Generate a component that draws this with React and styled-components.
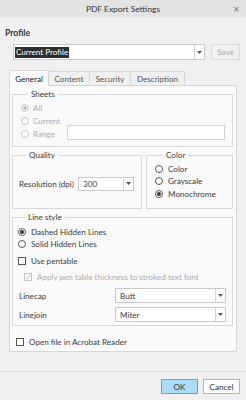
import React from 'react';
import styled, { createGlobalStyle } from 'styled-components';

const Global = createGlobalStyle`
  html, body { margin: 0; padding: 0; background: #f0f0f0; }
  body { font-family: Lato, "Noto Sans", sans-serif; font-size: 8.1px; color: #3a3a3a; }
  * { box-sizing: border-box; }
`;

const Window = styled.div`
  width: 246px;
  height: 400px;
  display: flex;
  flex-direction: column;
  background: #f0f0f0;
  overflow: hidden;
`;

const TitleBar = styled.div`
  height: 17px;
  flex: none;
  background: #e3e3e3;
  display: grid;
  grid-template-columns: 1fr auto 1fr;
  align-items: center;
  font-size: 8.4px;
  color: #333;
`;

const Title = styled.span`
  grid-column: 2;
`;

const Close = styled.span`
  grid-column: 3;
  justify-self: end;
  margin-right: 6px;
  font-size: 8px;
  color: #777;
  line-height: 1;
`;

const Body = styled.div`
  flex: 1;
  display: flex;
  flex-direction: column;
  padding: 10px 6px 0 5px;
`;

const SectionLabel = styled.div`
  font-weight: 700;
  font-size: 8.6px;
  line-height: 12px;
  color: #333;
`;

const ProfileRow = styled.div`
  display: flex;
  gap: 6px;
  margin-top: 5px;
  padding-left: 8px;
  height: 16px;
`;

const Combo = styled.div`
  display: flex;
  align-items: stretch;
  background: #fff;
  border: 1px solid #c9c9c9;
  width: ${p => p.$w}px;
  height: ${p => p.$h || 15}px;
  flex: none;
`;

const ComboValue = styled.div`
  flex: 1;
  display: flex;
  align-items: center;
  padding-left: ${p => p.$pad ?? 4}px;
  white-space: nowrap;
  overflow: hidden;
  color: #3a3a3a;
`;

const Selected = styled.span`
  background: #2f2f2f;
  color: #fff;
  line-height: 11px;
  padding: 0 1px;
`;

const ArrowBox = styled.div`
  width: 10px;
  flex: none;
  border-left: 1px solid #d4d4d4;
  display: flex;
  align-items: center;
  justify-content: center;
`;

const Button = styled.button`
  font: inherit;
  width: ${p => p.$w}px;
  height: ${p => p.$h}px;
  padding: 0;
  border: 1px solid ${p => (p.$primary ? '#52ade4' : p.disabled ? '#dadada' : '#b3b3b3')};
  background: ${p => (p.$primary ? '#a9ddf7' : p.disabled ? '#f0f0f0' : '#fdfdfd')};
  color: ${p => (p.disabled ? '#a9a9a9' : '#333')};
  flex: none;
`;

const Tabs = styled.div`
  display: flex;
  margin-top: 10px;
  margin-left: 4px;
  height: 15px;
  position: relative;
  z-index: 1;
`;

const Tab = styled.div`
  width: ${p => p.$w}px;
  height: ${p => (p.$active ? 16 : 15)}px;
  margin-top: ${p => (p.$active ? 0 : 1)}px;
  border: 1px solid #d6d6d6;
  border-bottom: ${p => (p.$active ? 'none' : '1px solid #d6d6d6')};
  margin-left: -1px;
  background: ${p => (p.$active ? '#fafafa' : '#f0f0f0')};
  display: flex;
  align-items: center;
  justify-content: center;
  color: ${p => (p.$active ? '#222' : '#555')};
  &:first-child { margin-left: 0; }
`;

const Panel = styled.div`
  margin-left: 4px;
  margin-right: 3px;
  height: 267px;
  border: 1px solid #d6d6d6;
  background: #fafafa;
  padding: 2px 3px 3px 2px;
  display: flex;
  flex-direction: column;
`;

const Group = styled.fieldset`
  margin: 0;
  min-width: 0;
  border: 1px solid #d8d8d8;
  padding: ${p => p.$pad};
  display: flex;
  flex-direction: column;
  width: ${p => (p.$w ? `${p.$w}px` : 'auto')};
  flex: ${p => (p.$grow ? 1 : 'none')};
  justify-content: ${p => (p.$center ? 'center' : 'flex-start')};
`;

const Legend = styled.legend`
  padding: 0 3px;
  margin-left: ${p => p.$ml || 7}px;
  line-height: 12px;
  color: #3a3a3a;
`;

const GroupRow = styled.div`
  display: flex;
  gap: 4px;
  margin-top: 2px;
`;

const OptionRow = styled.div`
  display: flex;
  align-items: center;
  height: ${p => p.$h || 13}px;
  padding-left: ${p => p.$indent || 0}px;
  margin-top: ${p => p.$mt || 0}px;
  color: ${p => (p.$disabled ? '#ababab' : '#3a3a3a')};
  white-space: nowrap;
`;

const RadioCircle = styled.span`
  width: 8px;
  height: 8px;
  border-radius: 50%;
  border: 1px solid ${p => (p.$disabled ? '#c6c6c6' : '#555')};
  background: #fff;
  display: inline-flex;
  align-items: center;
  justify-content: center;
  flex: none;
  margin-right: ${p => p.$gap || 4}px;
  &::after {
    content: '';
    width: 4px;
    height: 4px;
    border-radius: 50%;
    background: ${p => (p.$disabled ? '#c0c0c0' : '#333')};
    display: ${p => (p.$checked ? 'block' : 'none')};
  }
`;

const CheckBox = styled.span`
  width: 8px;
  height: 8px;
  border: 1px solid ${p => (p.$disabled ? '#c6c6c6' : '#555')};
  background: #fff;
  display: inline-flex;
  align-items: center;
  justify-content: center;
  flex: none;
  margin-right: ${p => p.$gap || 5}px;
`;

const Input = styled.div`
  margin-left: auto;
  width: 158px;
  height: 15px;
  background: #fff;
  border: 1px solid #d4d4d4;
  margin-top: -3px;
`;

const FieldRow = styled.div`
  display: flex;
  align-items: center;
  justify-content: space-between;
  margin-top: ${p => p.$mt || 0}px;
  padding-left: ${p => p.$pl || 0}px;
`;

const FieldLabel = styled.span`
  color: #3a3a3a;
  white-space: nowrap;
`;

const Footer = styled.div`
  margin-top: auto;
  margin-left: -5px;
  margin-right: -6px;
  height: 29px;
  border-top: 1px solid #dadada;
  display: flex;
  justify-content: flex-end;
  gap: 5px;
  padding: 7px 6px 0 0;
`;

const Arrow = () => (
  <svg width="5" height="3" viewBox="0 0 5 3">
    <path d="M0 0H5L2.5 3Z" fill="#555" />
  </svg>
);

const Check = () => (
  <svg width="6" height="6" viewBox="0 0 6 6">
    <path d="M0.8 3.2L2.4 4.8L5.3 1" fill="none" stroke="#b5b5b5" strokeWidth="1" />
  </svg>
);

const Radio = ({ checked, disabled, label, h, indent, gap, mt }) => (
  <OptionRow $h={h} $indent={indent} $disabled={disabled} $mt={mt}>
    <RadioCircle $checked={checked} $disabled={disabled} $gap={gap} />
    {label}
  </OptionRow>
);

const Select = ({ w, h, value }) => (
  <Combo $w={w} $h={h}>
    <ComboValue>{value}</ComboValue>
    <ArrowBox><Arrow /></ArrowBox>
  </Combo>
);

export default function App() {
  return (
    <>
      <Global />
      <Window>
        <TitleBar>
          <Title>PDF Export Settings</Title>
          <Close>✕</Close>
        </TitleBar>
        <Body>
          <SectionLabel>Profile</SectionLabel>
          <ProfileRow>
            <Combo $w={192} $h={16}>
              <ComboValue $pad={1}><Selected>Current Profile</Selected></ComboValue>
              <ArrowBox><Arrow /></ArrowBox>
            </Combo>
            <Button $w={29} $h={16} disabled>Save</Button>
          </ProfileRow>

          <Tabs>
            <Tab $w={40} $active>General</Tab>
            <Tab $w={42}>Content</Tab>
            <Tab $w={42}>Security</Tab>
            <Tab $w={55}>Description</Tab>
          </Tabs>
          <Panel>
            <Group $pad="1px 7px 6px 8px">
              <Legend>Sheets</Legend>
              <Radio checked disabled label="All" />
              <Radio disabled label="Current" />
              <OptionRow $disabled>
                <RadioCircle $disabled />
                Range
                <Input />
              </OptionRow>
            </Group>

            <GroupRow>
              <Group $w={130} $pad="0 7px 2px 6px" $center>
                <Legend>Quality</Legend>
                <FieldRow>
                  <FieldLabel>Resolution (dpi)</FieldLabel>
                  <Select w={56} h={14} value="300" />
                </FieldRow>
              </Group>
              <Group $grow $pad="1.5px 4px 8px 8px">
                <Legend $ml={8}>Color</Legend>
                <Radio h={12.5} gap={5} label="Color" />
                <Radio h={12.5} gap={5} label="Grayscale" />
                <Radio h={12.5} gap={5} checked label="Monochrome" />
              </Group>
            </GroupRow>

            <GroupRow>
              <Group $grow $pad="3px 6px 3px 5px">
                <Legend>Line style</Legend>
                <Radio h={12} gap={5} checked label="Dashed Hidden Lines" />
                <Radio h={12} gap={5} label="Solid Hidden Lines" />
                <OptionRow $h={12} $mt={5}>
                  <CheckBox />
                  Use pentable
                </OptionRow>
                <OptionRow $h={12} $mt={4} $indent={6} $disabled>
                  <CheckBox $disabled><Check /></CheckBox>
                  Apply pen table thickness to stroked text font
                </OptionRow>
                <FieldRow $mt={5} $pl={1}>
                  <FieldLabel>Linecap</FieldLabel>
                  <Select w={111} h={15} value="Butt" />
                </FieldRow>
                <FieldRow $mt={4} $pl={1}>
                  <FieldLabel>Linejoin</FieldLabel>
                  <Select w={111} h={15} value="Miter" />
                </FieldRow>
              </Group>
            </GroupRow>

            <OptionRow $h={12} $mt={10} $indent={4}>
              <CheckBox />
              Open file in Acrobat Reader
            </OptionRow>
          </Panel>

          <Footer>
            <Button $w={37} $h={15} $primary>OK</Button>
            <Button $w={37} $h={15}>Cancel</Button>
          </Footer>
        </Body>
      </Window>
    </>
  );
}
